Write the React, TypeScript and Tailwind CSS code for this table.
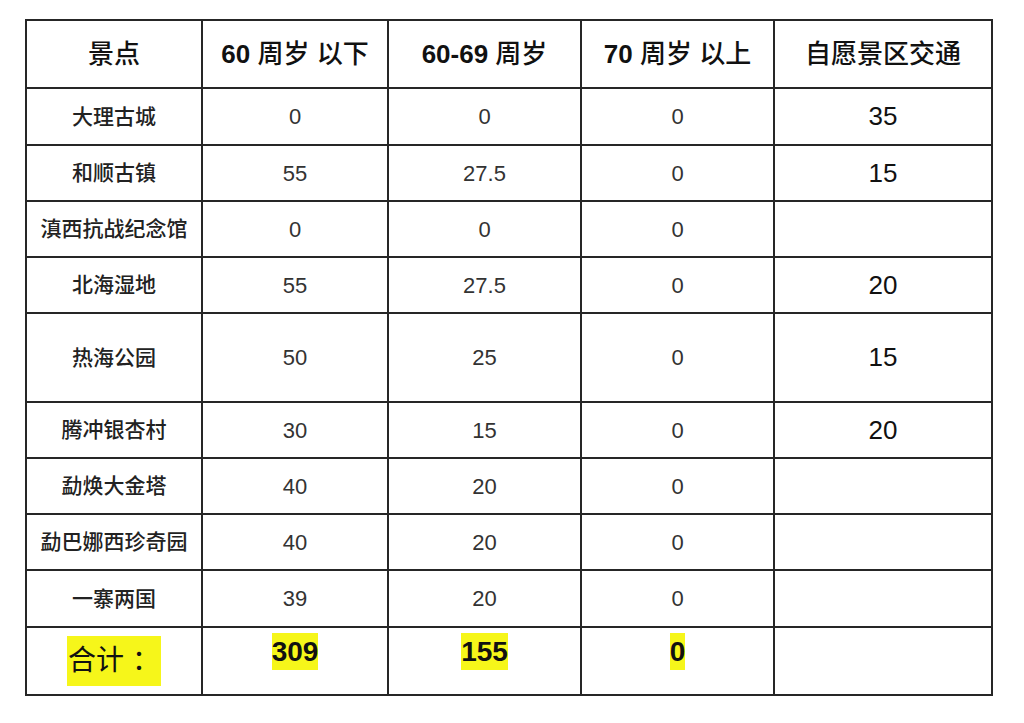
import React from "react";

const font = "font-['Liberation_Sans','Noto_Sans_CJK_SC',sans-serif]";

interface Row {
  name: string;
  a: string;
  b: string;
  c: string;
  d: string;
}

const rows: Row[] = [
  { name: "大理古城", a: "0", b: "0", c: "0", d: "35" },
  { name: "和顺古镇", a: "55", b: "27.5", c: "0", d: "15" },
  { name: "滇西抗战纪念馆", a: "0", b: "0", c: "0", d: "" },
  { name: "北海湿地", a: "55", b: "27.5", c: "0", d: "20" },
  { name: "热海公园", a: "50", b: "25", c: "0", d: "15" },
  { name: "腾冲银杏村", a: "30", b: "15", c: "0", d: "20" },
  { name: "勐焕大金塔", a: "40", b: "20", c: "0", d: "" },
  { name: "勐巴娜西珍奇园", a: "40", b: "20", c: "0", d: "" },
  { name: "一寨两国", a: "39", b: "20", c: "0", d: "" },
];

function Cell({ children, className = "" }: { children?: React.ReactNode; className?: string }) {
  return <div className={`bg-white flex items-center justify-center ${className}`}>{children}</div>;
}

function HeadText({ num, text }: { num?: string; text: string }) {
  return (
    <span className="text-[26px] font-medium text-[#111] whitespace-nowrap">
      {num && <span className="font-bold">{num} </span>}
      {text}
    </span>
  );
}

export default function App() {
  return (
    <div className={`min-h-screen bg-white pt-[19px] pl-[25px] ${font}`}>
      <div className="grid w-fit bg-[#262626] p-[2px] gap-[2px] grid-cols-[174px_184px_191px_191px_216px] grid-rows-[66px_55px_54px_54px_54px_87px_54px_54px_54px_55px_66px]">
        <Cell>
          <HeadText text="景点" />
        </Cell>
        <Cell>
          <HeadText num="60" text="周岁 以下" />
        </Cell>
        <Cell>
          <HeadText num="60-69" text="周岁" />
        </Cell>
        <Cell>
          <HeadText num="70" text="周岁 以上" />
        </Cell>
        <Cell>
          <HeadText text="自愿景区交通" />
        </Cell>

        {rows.map((r) => (
          <React.Fragment key={r.name}>
            <Cell>
              <span className="text-[21px] font-medium text-[#222] whitespace-nowrap">{r.name}</span>
            </Cell>
            <Cell>
              <span className="text-[22px] text-[#333]">{r.a}</span>
            </Cell>
            <Cell>
              <span className="text-[22px] text-[#333]">{r.b}</span>
            </Cell>
            <Cell>
              <span className="text-[22px] text-[#333]">{r.c}</span>
            </Cell>
            <Cell>
              <span className="text-[26px] font-medium text-[#111]">{r.d}</span>
            </Cell>
          </React.Fragment>
        ))}

        <Cell>
          <span className="bg-[#f6f61a] h-[50px] px-[1px] flex items-center text-[28px] text-[#111] whitespace-nowrap">
            合计 ：
          </span>
        </Cell>
        <Cell className="items-start pt-[5px]">
          <span className="bg-[#f6f61a] h-[37px] leading-[37px] text-[28px] font-bold text-[#111]">309</span>
        </Cell>
        <Cell className="items-start pt-[5px]">
          <span className="bg-[#f6f61a] h-[37px] leading-[37px] text-[28px] font-bold text-[#111]">155</span>
        </Cell>
        <Cell className="items-start pt-[5px]">
          <span className="bg-[#f6f61a] h-[37px] leading-[37px] text-[28px] font-bold text-[#111]">0</span>
        </Cell>
        <Cell />
      </div>
    </div>
  );
}
